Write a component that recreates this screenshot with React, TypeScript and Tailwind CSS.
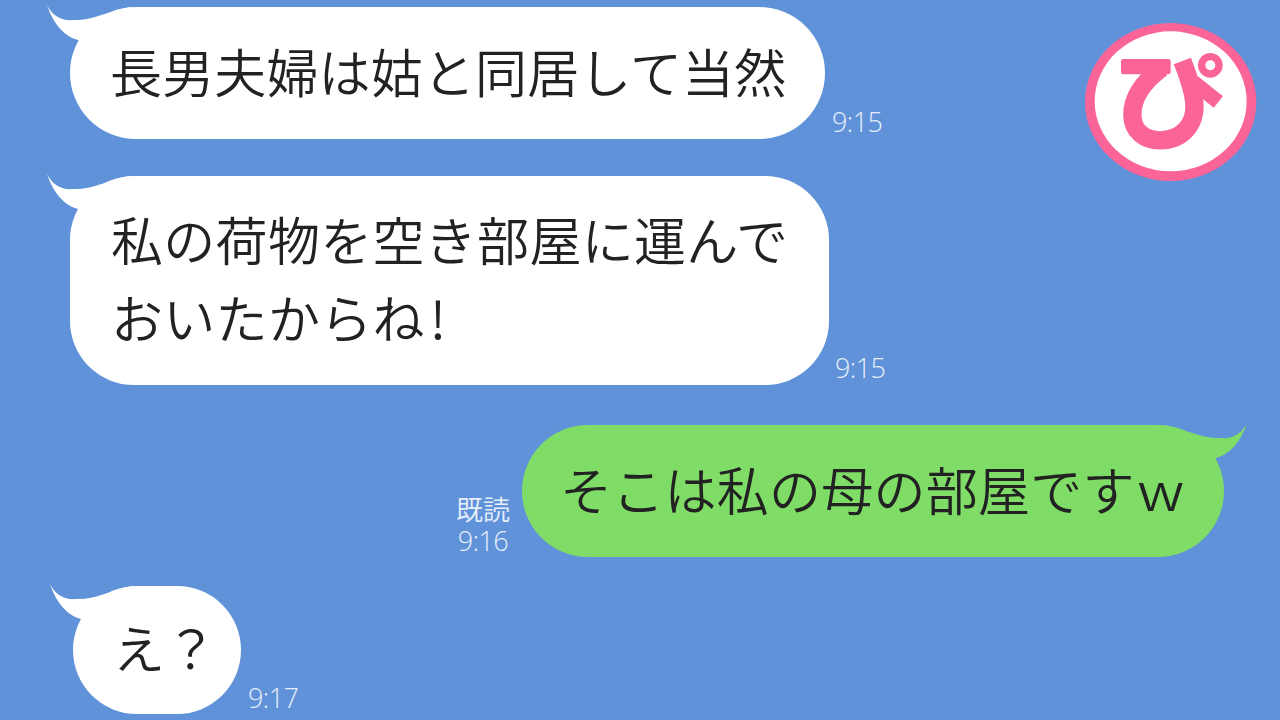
import React from 'react';

const jp = '[font-family:"Noto_Sans_CJK_JP","Noto_Sans_CJK_SC",sans-serif]';

function Tail({ green }: { green?: boolean }) {
  return (
    <svg
      viewBox="0 0 90 50"
      className={
        green
          ? 'absolute right-[-24px] top-[-3px] w-[90px] h-[50px] -scale-x-100 fill-[#7fdc66]'
          : 'absolute left-[-24px] top-[-3px] w-[90px] h-[50px] fill-white'
      }
    >
      <path d="M1 1C6 12 16 17 27 16C45 17 60 8 84 3L84 20L60 46L32 36C20 33 8 22 1 1Z" />
    </svg>
  );
}

function Time({ children }: { children: React.ReactNode }) {
  return (
    <div className="text-[27px] leading-[32px] text-[#e6eefa] font-['Open_Sans',sans-serif] font-light tracking-[-0.6px]">
      {children}
    </div>
  );
}

function Logo() {
  return (
    <svg viewBox="75 70 516 477" className="absolute left-[1085px] top-[23px] w-[172px] h-[159px]">
      <ellipse cx="332" cy="307" rx="257" ry="237" fill="#fb6498" />
      <ellipse cx="332" cy="305" rx="228" ry="210" fill="#ffffff" />
      <rect x="183" y="178" width="149" height="46" rx="7" fill="#fb6498" />
      <g fill="none" stroke="#fb6498" strokeLinejoin="round">
        <path
          d="M305 205C245 250 217 300 217 345C217 395 255 422 300 422C365 422 408 375 403 310C400 270 385 230 367 184"
          strokeWidth="55"
        />
        <path d="M400 247L475 307" strokeWidth="44" />
        <circle cx="451" cy="197" r="26" strokeWidth="22" />
      </g>
    </svg>
  );
}

export default function App() {
  return (
    <div className={`relative w-[1280px] h-[720px] overflow-hidden bg-[#6092d9] pt-[7px] text-[#222222] ${jp}`}>
      <Logo />

      {/* message 1 */}
      <div className="flex items-end gap-[7px] pl-[70px]">
        <div className="relative w-[755px] h-[132px] rounded-[66px] bg-white pl-[40px] pt-[25px] text-[52px] leading-[78px] tracking-[0.15px] font-[350]">
          <Tail />
          <p className="relative">長男夫婦は姑と同居して当然</p>
        </div>
        <div className="pb-[1px]">
          <Time>9:15</Time>
        </div>
      </div>

      {/* message 2 */}
      <div className="flex items-end gap-[6px] pl-[70px] mt-[37px]">
        <div className="relative w-[759px] h-[209px] rounded-[64px] bg-white pl-[41px] pt-[24px] text-[52px] leading-[78px] tracking-[0.3px] font-[350]">
          <Tail />
          <p className="relative">
            私の荷物を空き部屋に運んで
            <br />
            おいたからね<span className="ml-[5px]">!</span>
          </p>
        </div>
        <div className="pb-[1px]">
          <Time>9:15</Time>
        </div>
      </div>

      {/* my reply */}
      <div className="flex items-end justify-end gap-[12px] pr-[56px] mt-[40px]">
        <div className="flex flex-col items-center">
          <div className="text-[27px] leading-[32px] text-[#e6eefa] font-[350]">既読</div>
          <Time>9:16</Time>
        </div>
        <div className="relative w-[702px] h-[132px] rounded-[66px] bg-[#7fdc66] pl-[38px] pt-[25px] text-[52px] leading-[78px] tracking-[0.25px] font-[350]">
          <Tail green />
          <p className="relative">そこは私の母の部屋ですｗ</p>
        </div>
      </div>

      {/* message 3 */}
      <div className="flex items-end gap-[7px] pl-[73px] mt-[29px]">
        <div className="relative w-[168px] h-[128px] rounded-[64px] bg-white pl-[40px] pt-[22px] text-[52px] leading-[78px] font-[350]">
          <Tail />
          <p className="relative">え？</p>
        </div>
        <Time>9:17</Time>
      </div>
    </div>
  );
}
